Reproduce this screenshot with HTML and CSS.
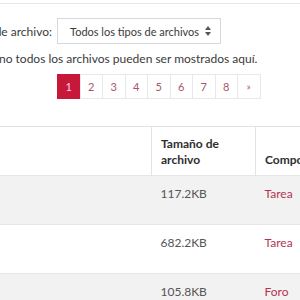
FILE: index.html
```html
<!DOCTYPE html>
<html lang="es">
<head>
<meta charset="utf-8">
<link rel="stylesheet" href="styles.css">
</head>
<body>
<div class="page">
  <div class="topline"></div>
  <div class="filter">
    <label class="label"><span>Tipo de archivo:</span></label>
    <div class="select"><span>Todos los tipos de archivos</span>
      <svg class="arrows" width="6" height="10" viewBox="0 0 6 10"><path d="M3 0 L6 4 L0 4 Z M0 6 L6 6 L3 10 Z" fill="#555"/></svg>
    </div>
  </div>
  <p class="note">no todos los archivos pueden ser mostrados aquí.</p>
  <nav class="pager">
    <span class="pg active">1</span>
    <span class="pg">2</span>
    <span class="pg">3</span>
    <span class="pg">4</span>
    <span class="pg">5</span>
    <span class="pg">6</span>
    <span class="pg">7</span>
    <span class="pg">8</span>
    <span class="pg small">»</span>
  </nav>
  <div class="tablewrap">
  <table class="files">
    <thead>
      <tr><th class="c1"></th><th class="c2">Tamaño de archivo</th><th class="c3">Componente</th></tr>
    </thead>
    <tbody>
      <tr class="odd"><td class="c1"></td><td>117.2KB</td><td><a>Tarea</a></td></tr>
      <tr><td class="c1"></td><td>682.2KB</td><td><a>Tarea</a></td></tr>
      <tr class="odd"><td class="c1"></td><td>105.8KB</td><td><a>Foro</a></td></tr>
    </tbody>
  </table>
  </div>
</div>
</body>
</html>
```
FILE: styles.css
```css
html, body { margin: 0; padding: 0; background: #fff; }
body { font-family: "Lato", "Open Sans", sans-serif; font-size: 12px; color: #3a3a3a; overflow: hidden; width: 300px; height: 300px; }
.page { width: 300px; overflow: hidden; }
.topline { height: 3px; border-bottom: 1px solid #e6e6e6; }
.filter { display: flex; align-items: center; gap: 5px; margin-top: 14px; height: 26px; }
.label { display: flex; justify-content: flex-end; width: 52px; flex: none; white-space: nowrap; }
.select { display: flex; align-items: center; justify-content: space-between; width: 164px; height: 26px; box-sizing: border-box; border: 1px solid #d6d9dc; padding: 0 9px 0 12px; white-space: nowrap; flex: none; font-size: 11px; }
.arrows { display: block; flex: none; }
.note { margin: 6px 0 0 -1px; white-space: nowrap; line-height: 18px; }
.pager { display: flex; margin: 6px 0 0 58px; }
.pg { width: 23.5px; height: 25px; box-sizing: border-box; border: 1px solid #e8e8e8; margin-left: -1px; display: flex; align-items: center; justify-content: center; color: #a8566a; font-size: 11px; flex: none; }
.pg.small { font-size: 9px; }
.pg.active { background: #c8183a; border-color: #c8183a; color: #fce; }
.tablewrap { margin-top: 27px; width: 300px; overflow: hidden; }
.files { border-collapse: collapse; width: 340px; table-layout: fixed; }
.files th, .files td { text-align: left; padding: 0 0 0 9px; }
.files tr { height: 49px; }
.files thead tr { border-top: 1px solid #e3e3e3; }
.files th { vertical-align: bottom; padding-bottom: 7px; font-weight: 700; line-height: 16px; color: #2e2e2e; }
.files .c1 { width: 151px; padding: 0; }
.files .c2 { width: 94px; border-left: 1px solid #e3e3e3; border-right: 1px solid #e3e3e3; }
.files tbody tr { border-top: 1px solid #e6e6e6; }
.files td { vertical-align: top; padding-top: 9px; line-height: 18px; color: #555; }
.files tr.odd { background: #f2f2f2; }
.files a { color: #b5334f; }
```
